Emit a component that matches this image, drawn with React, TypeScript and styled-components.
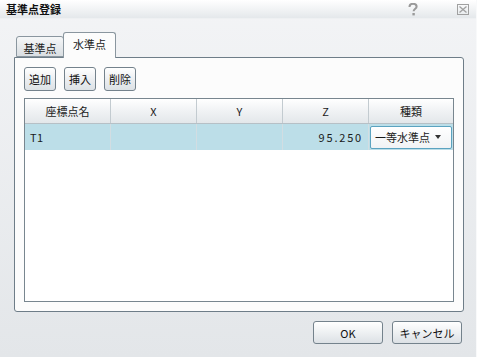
import React, { useState } from 'react';
import styled, { createGlobalStyle } from "styled-components";

const GlobalStyle = createGlobalStyle`
	html, body {
		margin: 0;
		padding: 0;
		background: #ffffff;
	}
	body {
		font-family: "Noto Sans CJK JP", "Liberation Sans", sans-serif;
		font-size: 11px;
		color: #1a1a1a;
	}
`;

const columns = ["座標点名", "X", "Y", "Z", "種類"];

const App = () => {
	const [activeTab, setActiveTab] = useState(1);

	return (
		<>
			<GlobalStyle />
			<Window>
				<TitleBar>
					<Title>基準点登録</Title>
					<TitleIcons>
						<svg width="10" height="13" viewBox="0 0 10 13">
							<path d="M1.5 4 C1.5 1.5 3 0.8 5 0.8 C7.2 0.8 8.6 2 8.6 3.7 C8.6 5.6 5.6 6 5.6 8.3" fill="none" stroke="#9a9a9a" strokeWidth="2" />
							<rect x="4.4" y="10" width="2.4" height="2.4" fill="#9a9a9a" />
						</svg>
						<svg width="12" height="11" viewBox="0 0 12 11">
							<rect x="0.5" y="0.5" width="11" height="10" fill="none" stroke="#a0a0a0" />
							<path d="M2.5 2.5 L9.5 8.5 M9.5 2.5 L2.5 8.5" stroke="#a0a0a0" strokeWidth="1.3" />
						</svg>
					</TitleIcons>
				</TitleBar>
				<Body>
					<TabStrip>
						<Tab $active={activeTab === 0} onClick={() => setActiveTab(0)}>基準点</Tab>
						<Tab $active={activeTab === 1} onClick={() => setActiveTab(1)}>水準点</Tab>
					</TabStrip>
					<Panel>
						<ToolRow>
							<SmallButton>追加</SmallButton>
							<SmallButton>挿入</SmallButton>
							<SmallButton>削除</SmallButton>
						</ToolRow>
						<Grid>
							<HeaderRow>
								{columns.map((c) => (
									<HeaderCell key={c}>{c}</HeaderCell>
								))}
							</HeaderRow>
							<DataRow>
								<Cell>T1</Cell>
								<Cell />
								<Cell />
								<Cell $align="right">95.250</Cell>
								<Cell $pad={1}>
									<Select>
										<span>一等水準点</span>
										<Arrow />
									</Select>
								</Cell>
							</DataRow>
						</Grid>
					</Panel>
					<Footer>
						<DialogButton>OK</DialogButton>
						<DialogButton>キャンセル</DialogButton>
					</Footer>
				</Body>
			</Window>
		</>
	);
};

const Window = styled.div`
	width: 476px;
	height: 357px;
	display: flex;
	flex-direction: column;
	background: linear-gradient(#f3f4f6, #e3e6e9);
	border-right: 1px solid #f8f9fa;
`;

const TitleBar = styled.div`
	height: 18px;
	display: flex;
	align-items: center;
	justify-content: space-between;
	padding: 0 7px 0 6px;
	background: linear-gradient(#ffffff, #e4e8eb);
	border-bottom: 1px solid #eef0f2;
`;

const Title = styled.div`
	font-weight: bold;
	font-size: 11px;
	color: #111;
	line-height: 18px;
	margin-top: -1px;
`;

const TitleIcons = styled.div`
	display: flex;
	align-items: center;
	gap: 39px;
`;

const Body = styled.div`
	flex: 1;
	display: flex;
	flex-direction: column;
	padding: 12px 12px 0 14px;
`;

const TabStrip = styled.div`
	display: flex;
	align-items: flex-end;
	padding-left: 2px;
	height: 26px;
	position: relative;
	z-index: 1;
`;

const Tab = styled.div<{ $active: boolean }>`
	height: ${(p) => (p.$active ? "26px" : "21px")};
	width: ${(p) => (p.$active ? "53px" : "48px")};
	box-sizing: border-box;
	border: 1px solid #8a969f;
	border-bottom: ${(p) => (p.$active ? "none" : "1px solid #8a969f")};
	border-radius: 3px 3px 0 0;
	background: ${(p) => (p.$active ? "#fcfcfc" : "linear-gradient(#f6f7f8, #d9dee2)")};
	margin-left: ${(p) => (p.$active ? "-1px" : "0")};
	margin-bottom: ${(p) => (p.$active ? "-1px" : "0")};
	display: flex;
	align-items: center;
	justify-content: center;
	padding-top: ${(p) => (p.$active ? "0" : "3px")};
	padding-bottom: ${(p) => (p.$active ? "4px" : "0")};
	font-size: 11px;
	cursor: default;
`;

const Panel = styled.div`
	width: 450px;
	height: 255px;
	box-sizing: border-box;
	border: 1px solid #6e7d88;
	border-radius: 0 3px 3px 3px;
	background: #fcfcfc;
	padding: 9px;
	display: flex;
	flex-direction: column;
	gap: 7px;
`;

const ToolRow = styled.div`
	display: flex;
	gap: 8px;
`;

const SmallButton = styled.button`
	width: 32px;
	height: 24px;
	padding: 0;
	border: 1px solid #74828c;
	border-radius: 3px;
	background: linear-gradient(#ffffff, #e9ecef 60%, #dde2e6);
	font-family: inherit;
	font-size: 11px;
	color: #111;
`;

const Grid = styled.div`
	flex: 1;
	border: 1px solid #78868f;
	background: #ffffff;
	display: flex;
	flex-direction: column;
`;

const HeaderRow = styled.div`
	display: grid;
	grid-template-columns: 86px 86px 86px 86px 1fr;
	height: 24px;
	background: linear-gradient(#ffffff, #f0f2f4 50%, #e3e7ea);
	border-bottom: 1px solid #b6c0c6;
`;

const HeaderCell = styled.div`
	display: flex;
	align-items: center;
	justify-content: center;
	border-right: 1px solid #c3cbd0;
	font-size: 11px;
	&:last-child {
		border-right: none;
	}
`;

const DataRow = styled.div`
	display: grid;
	grid-template-columns: 86px 86px 86px 86px 1fr;
	height: 26px;
	background: #bcdee8;
`;

const Cell = styled.div<{ $align?: "left" | "right"; $pad?: number }>`
	display: flex;
	align-items: center;
	justify-content: ${(p) => (p.$align === "right" ? "flex-end" : "flex-start")};
	padding: ${(p) => (p.$pad !== undefined ? `${p.$pad}px` : "0 5px")};
	border-right: 1px solid #d2dde2;
	font-size: 11px;
	letter-spacing: ${(p) => (p.$align === "right" ? "1.8px" : "0.4px")};
	&:last-child {
		border-right: none;
	}
`;

const Select = styled.div`
	flex: 1;
	height: 23px;
	box-sizing: border-box;
	border: 1px solid #5ba3c0;
	border-radius: 2px;
	background: linear-gradient(#ffffff, #f1f3f5);
	display: flex;
	align-items: center;
	justify-content: space-between;
	padding: 0 10px 0 4px;
	font-size: 11px;
	letter-spacing: 0;
`;

const Arrow = styled.span`
	width: 0;
	height: 0;
	border-left: 3.5px solid transparent;
	border-right: 3.5px solid transparent;
	border-top: 4px solid #333;
`;

const Footer = styled.div`
	display: flex;
	justify-content: flex-end;
	gap: 9px;
	padding: 9px 2px 0 0;
`;

const DialogButton = styled.button`
	width: 70px;
	height: 23px;
	padding: 0;
	border: 1px solid #74828c;
	border-radius: 3px;
	background: linear-gradient(#ffffff, #eceff1 55%, #dce1e5);
	font-family: inherit;
	font-size: 11px;
	color: #111;
`;

export default App;
